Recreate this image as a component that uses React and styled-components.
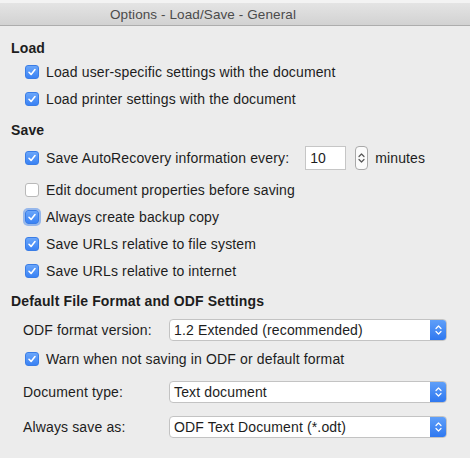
import React from "react";
import styled, { createGlobalStyle, css } from "styled-components";

const GlobalStyle = createGlobalStyle`
  html, body {
    margin: 0;
    padding: 0;
    background: #ececec;
  }
  body {
    font-family: "Liberation Sans", Arial, sans-serif;
    color: #1d1d1d;
  }
`;

const Window = styled.div`
  width: 470px;
  height: 458px;
  background: #ececec;
  overflow: hidden;
`;

const TitleBar = styled.div`
  height: 22px;
  border-top: 3px solid #f3f3f3;
  background: linear-gradient(#e4e4e4, #d2d2d2);
  border-bottom: 1px solid #adadad;
  display: flex;
  align-items: center;
  justify-content: center;
  padding-right: 64px;
  font-size: 13.5px;
  letter-spacing: 0.1px;
  color: #4b4b4b;
`;

const Content = styled.div`
  padding-left: 11px;
  padding-right: 23px;
  letter-spacing: 0.14px;
`;

const Heading = styled.div`
  height: 20px;
  display: flex;
  align-items: center;
  font-size: 14px;
  font-weight: bold;
  margin-top: ${(p) => p.$top}px;
`;

const Row = styled.div`
  height: ${(p) => p.$h || 27}px;
  display: flex;
  align-items: center;
  padding-left: 14px;
  font-size: 14px;
  margin-top: ${(p) => p.$top || 0}px;
`;

const Box = styled.span`
  width: 14px;
  height: 14px;
  box-sizing: border-box;
  border-radius: 3px;
  margin-right: 7px;
  flex: none;
  display: flex;
  align-items: center;
  justify-content: center;
  ${(p) =>
    p.$checked
      ? css`
          background: linear-gradient(#6aa6fa, #3a82f4);
          border: 1px solid #3a7de6;
        `
      : css`
          background: #ffffff;
          border: 1px solid #b9b9b9;
        `}
  ${(p) =>
    p.$focus &&
    css`
      box-shadow: 0 0 0 2px rgba(80, 140, 235, 0.55);
    `}
`;

const Tick = () => (
  <svg width="10" height="10" viewBox="0 0 10 10">
    <path
      d="M2 5.3 L4.1 7.4 L8 2.6"
      fill="none"
      stroke="#fff"
      strokeWidth="1.6"
      strokeLinecap="round"
      strokeLinejoin="round"
    />
  </svg>
);

const Check = ({ checked, focus, h, top, children }) => (
  <Row $h={h} $top={top}>
    <Box $checked={checked} $focus={focus}>
      {checked && <Tick />}
    </Box>
    {children}
  </Row>
);

const NumField = styled.div`
  width: 41px;
  height: 24px;
  box-sizing: border-box;
  background: #fff;
  border: 1px solid #c6c6c6;
  margin-left: 16px;
  padding-left: 4px;
  display: flex;
  align-items: center;
`;

const Spin = styled.div`
  width: 13px;
  height: 24px;
  box-sizing: border-box;
  border: 1px solid #a9a9a9;
  border-radius: 4px;
  background: #fbfbfb;
  margin-left: 9px;
  margin-right: 7px;
  display: flex;
  align-items: center;
  justify-content: center;
`;

const Label = styled.div`
  width: 146px;
  flex: none;
`;

const SelectRow = styled.div`
  height: 22px;
  display: flex;
  align-items: center;
  padding-left: 12px;
  font-size: 14px;
  margin-top: ${(p) => p.$top}px;
`;

const Select = styled.div`
  flex: 1;
  height: 22px;
  box-sizing: border-box;
  display: flex;
  align-items: stretch;
  border: 1px solid #c3c3c3;
  border-radius: 4px;
  background: #fff;
  overflow: hidden;
`;

const SelectText = styled.div`
  flex: 1;
  display: flex;
  align-items: center;
  padding-left: 4px;
`;

const SelectArrow = styled.div`
  width: 16px;
  background: linear-gradient(#5f9ff9, #2f78f0);
  display: flex;
  align-items: center;
  justify-content: center;
`;

const Chevrons = ({ color }) => (
  <svg width="7" height="12" viewBox="0 0 7 12">
    <path
      d="M1 4.5 L3.5 2 L6 4.5 M1 7.5 L3.5 10 L6 7.5"
      fill="none"
      stroke={color}
      strokeWidth="1.2"
      strokeLinecap="round"
      strokeLinejoin="round"
    />
  </svg>
);

const Dropdown = ({ label, value, top }) => (
  <SelectRow $top={top}>
    <Label>{label}</Label>
    <Select>
      <SelectText>{value}</SelectText>
      <SelectArrow>
        <Chevrons color="#fff" />
      </SelectArrow>
    </Select>
  </SelectRow>
);

export default function App() {
  return (
    <Window>
      <GlobalStyle />
      <TitleBar>Options - Load/Save - General</TitleBar>
      <Content>
        <Heading $top={12}>Load</Heading>
        <Check checked>Load user-specific settings with the document</Check>
        <Check checked>Load printer settings with the document</Check>

        <Heading $top={8}>Save</Heading>
        <Check checked h={36}>
          Save AutoRecovery information every:
          <NumField>10</NumField>
          <Spin>
            <Chevrons color="#555" />
          </Spin>
          minutes
        </Check>
        <Check>Edit document properties before saving</Check>
        <Check checked focus>
          Always create backup copy
        </Check>
        <Check checked>Save URLs relative to file system</Check>
        <Check checked>Save URLs relative to internet</Check>

        <Heading $top={7}>Default File Format and ODF Settings</Heading>
        <Dropdown label="ODF format version:" value="1.2 Extended (recommended)" top={8} />
        <Check checked h={24} top={6}>
          Warn when not saving in ODF or default format
        </Check>
        <Dropdown label="Document type:" value="Text document" top={10} />
        <Dropdown label="Always save as:" value="ODF Text Document (*.odt)" top={13} />
      </Content>
    </Window>
  );
}
